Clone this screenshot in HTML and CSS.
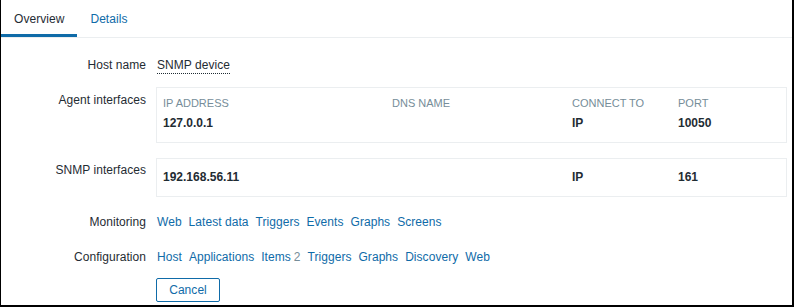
FILE: index.html
```html
<!DOCTYPE html>
<html lang="en">
<head>
    <meta charset="UTF-8">
    <meta name="viewport" content="width=device-width, initial-scale=1.0">
    <title>Host overview</title>
    <link rel="stylesheet" href="styles.css">
</head>
<body>
    <div class="frame">
        <ul class="tabs">
            <li class="tab active">Overview</li>
            <li class="tab"><a href="#">Details</a></li>
        </ul>

        <div class="form">
            <div class="row row-host">
                <div class="label">Host name</div>
                <div class="field"><span class="hint">SNMP device</span></div>
            </div>

            <div class="row row-agent">
                <div class="label">Agent interfaces</div>
                <div class="field">
                    <div class="iface iface-agent">
                        <div class="cols head">
                            <span>IP ADDRESS</span>
                            <span>DNS NAME</span>
                            <span>CONNECT TO</span>
                            <span>PORT</span>
                        </div>
                        <div class="cols vals">
                            <span>127.0.0.1</span>
                            <span></span>
                            <span>IP</span>
                            <span>10050</span>
                        </div>
                    </div>
                </div>
            </div>

            <div class="row row-snmp">
                <div class="label">SNMP interfaces</div>
                <div class="field">
                    <div class="iface iface-snmp">
                        <div class="cols vals">
                            <span>192.168.56.11</span>
                            <span></span>
                            <span>IP</span>
                            <span>161</span>
                        </div>
                    </div>
                </div>
            </div>

            <div class="row row-links">
                <div class="label">Monitoring</div>
                <div class="field links">
                    <a href="#">Web</a>
                    <a href="#">Latest data</a>
                    <a href="#">Triggers</a>
                    <a href="#">Events</a>
                    <a href="#">Graphs</a>
                    <a href="#">Screens</a>
                </div>
            </div>

            <div class="row row-links">
                <div class="label">Configuration</div>
                <div class="field links">
                    <a href="#">Host</a>
                    <a href="#">Applications</a>
                    <span><a href="#">Items</a><span class="count">2</span></span>
                    <a href="#">Triggers</a>
                    <a href="#">Graphs</a>
                    <a href="#">Discovery</a>
                    <a href="#">Web</a>
                </div>
            </div>

            <div class="row row-buttons">
                <div class="label"></div>
                <div class="field"><button type="button" class="btn-alt">Cancel</button></div>
            </div>
        </div>
    </div>
</body>
</html>
```

FILE: styles.css
```css
* { box-sizing: border-box; }
body { margin: 0; font-family: "Liberation Sans", Arial, sans-serif; font-size: 12px; letter-spacing: 0.05px; color: #1f2c33; background: #fff; }
a { color: #0f6ba8; text-decoration: none; }

.frame { width: 794px; height: 307px; border-left: 1px solid #000; border-right: 2px solid #000; border-bottom: 2px solid #000; background: #fff; overflow: hidden; }

/* tabs */
.tabs { list-style: none; margin: 0; padding: 0; display: flex; border-bottom: 1px solid #ebeef0; }
.tab { height: 37px; line-height: 36px; padding: 1px 13px 0 13px; border-bottom: 3px solid transparent; }
.tab.active { border-bottom-color: #0f6ba8; color: #1f2c33; }

/* form rows */
.form { padding: 17px 5px 0 0; }
.row { display: flex; }
.label { width: 145px; flex: none; text-align: right; line-height: 20px; }
.field { flex: 1; margin-left: 11px; line-height: 20px; }
.hint { border-bottom: 1px dotted #1f2c33; padding-bottom: 1px; }

.row-agent { margin-top: 12px; }
.row-agent .label { padding-top: 3px; }
.row-snmp { margin-top: 15px; }
.row-snmp .label { padding-top: 2px; }
.row-links { margin-top: 15px; }
.row-links + .row-links { margin-top: 15px; }
.row-buttons { margin-top: 11px; }

/* interface boxes */
.iface { border: 1px solid #ebeef0; margin-left: -1px; padding: 0 5px 0 6px; }
.iface-agent { height: 56px; padding-top: 7px; }
.iface-snmp { height: 39px; padding-top: 8px; }
.cols { display: grid; grid-template-columns: 229px 180px 106px 1fr; }
.head { font-size: 11px; letter-spacing: 0; color: #768d99; line-height: 16px; }
.vals { font-weight: bold; letter-spacing: 0; line-height: 20px; }
.iface-agent .vals { margin-top: 2px; }

/* link lists */
.links { display: flex; gap: 7px; }
.count { color: #768d99; margin-left: 3px; }

.btn-alt { font-family: inherit; font-size: 12px; letter-spacing: 0.05px; color: #0f6ba8; background: #fff; border: 1px solid #0f6ba8; border-radius: 2px; height: 24px; width: 64px; padding: 0; margin-left: -1px; cursor: pointer; }
```
